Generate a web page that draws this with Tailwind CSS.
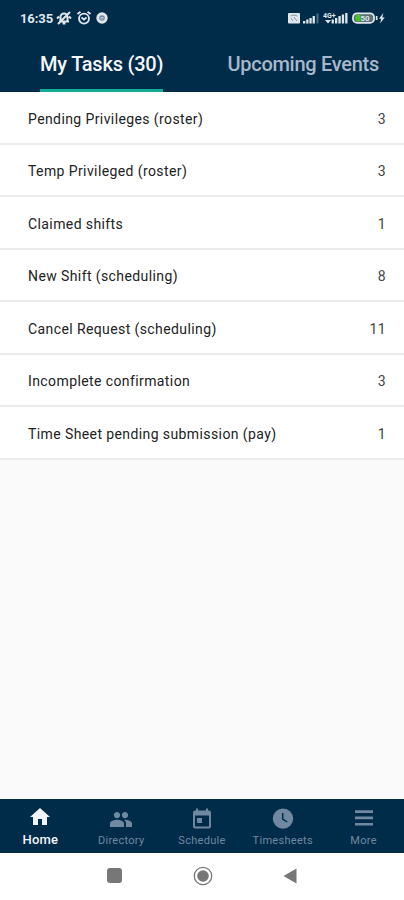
<!DOCTYPE html>
<html lang="en">

<head>
  <meta charset="UTF-8" />
  <meta name="viewport" content="width=device-width, initial-scale=1.0" />
  <title>My Tasks</title>
  <script src="https://cdn.jsdelivr.net/npm/@tailwindcss/browser@4"></script>
</head>

<body class="bg-[#fafafa] font-['Roboto',sans-serif]">
  <div class="flex h-screen w-full flex-col overflow-hidden">
    <header class="flex h-[92px] shrink-0 flex-col bg-[#002b49]">
      <!-- Status bar -->
      <div class="flex h-9 items-center justify-between pl-5 pr-[18px] text-[#dfe6ec]">
        <div class="flex items-center">
          <span class="w-[34px] whitespace-nowrap pt-px text-[13px] font-bold tracking-[-0.1px]">16:35</span>
          <svg class="ml-0.5 h-4 w-4" viewBox="0 0 16 16" fill="none" stroke="currentColor" stroke-width="2">
            <path d="M3 11.5h10M4.5 11V7a3.5 3.5 0 0 1 7 0v4M6.5 13.5h3M2 14 14 2M1 8.5l2-2M13 6.5l2 2" />
          </svg>
          <svg class="ml-1 h-4 w-4" viewBox="0 0 16 16" fill="none" stroke="currentColor" stroke-width="1.9">
            <circle cx="8" cy="8.6" r="5" />
            <path d="M1.5 4 4.5 1.8M14.5 4l-3-2.2M5.5 7.5 8 9.5l2.5-2" />
          </svg>
          <svg class="ml-[3px] h-3.5 w-3.5" viewBox="0 0 14 14">
            <circle cx="7" cy="7" r="5.7" fill="currentColor" />
            <circle cx="7" cy="7" r="2.8" fill="#71879a" />
            <path d="M5.5 6.5h3M5.5 8h3" stroke="#dfe6ec" stroke-width=".7" />
          </svg>
        </div>
        <div class="flex items-center">
          <svg class="h-3.5 w-[98px]" viewBox="0 0 98 14" fill="currentColor">
            <rect x="0" y="2" width="12" height="10.5" rx="1" />
            <path d="M2.5 5q3.5-2 7 0M3 7l2 3M6 6l3 4" fill="none" stroke="#8798a6" />
            <path d="M15 10h2.3v2.5H15zM18.2 8.5h2.3v4h-2.3zM21.4 7h2.3v5.5h-2.3zM24.6 5h2.3v7.5h-2.3z" />
            <path d="M28.5 2.5h2v10h-2z" opacity=".35" />
            <text x="35" y="6.5" font-size="7" font-weight="700">4G+</text>
            <path d="M37 9l3 3.5L43 9zM43.6 8.5h2.3v4h-2.3zM47 7h2.3v5.5H47zM50.4 5h2.3v7.5h-2.3zM53.8 3.5h2.3v9h-2.3zM57.2 2h2.3v10.5h-2.3z" />
            <rect x="65" y="2.3" width="21" height="9.6" rx="4" fill="#596f79" stroke="currentColor" stroke-width="1.8" />
            <path d="M68 4h4.5v6.2H68q-1.5-3 0-6.2z" fill="#45c51d" />
            <text x="72.5" y="9.9" font-size="8" font-weight="700">50</text>
            <path d="M87.8 5h1.7v4h-1.7zM95.3 2 91 7.8h2.3l-1.3 4.7 4.7-6h-2.4z" />
          </svg>
        </div>
      </div>

      <!-- Tabs -->
      <div class="flex flex-1 justify-between pl-10 pr-[25px]">
        <button class="flex h-14 items-center border-b-[3px] border-[#14ab96] pt-0.5 text-xl font-medium leading-6 tracking-[-0.22px] text-[#f5f7f9]">My Tasks (30)</button>
        <button class="flex h-14 items-center border-b-[3px] border-transparent pt-0.5 text-xl font-medium leading-6 tracking-[-0.28px] text-[#a7b8ca]">Upcoming Events</button>
      </div>
    </header>

    <!-- Task list -->
    <main class="flex-1" id="task-list"></main>

    <!-- Bottom navigation -->
    <nav class="grid h-[54px] shrink-0 grid-cols-5 bg-[#002b49] text-[11px] tracking-[0.3px] text-[#7089a1]">
      <a class="flex flex-col items-center pt-1.5 text-[#f0f3f6]">
        <svg class="h-6 w-6" viewBox="0 0 24 24" fill="currentColor">
          <path d="M10 20v-6h4v6h5v-8h3L12 3 2 12h3v8z" />
        </svg>
        <span class="pt-0.5 text-[13px] font-medium leading-[18px] tracking-[0.2px]">Home</span>
      </a>
      <a class="flex flex-col items-center pt-2">
        <svg class="h-6 w-6" viewBox="0 0 24 24" fill="currentColor">
          <path d="M16 11.3c1.75 0 3.2-1.4 3.2-3.2S17.75 4.9 16 4.9s-3.2 1.4-3.2 3.2 1.45 3.2 3.2 3.2zm-8 0c1.75 0 3.2-1.4 3.2-3.2S9.75 4.9 8 4.9 4.8 6.3 4.8 8.1s1.45 3.2 3.2 3.2zm0 1.5c-2.33 0-7 1.17-7 3.7V20h14v-3.5c0-2.53-4.67-3.7-7-3.7zm8 0c-.29 0-.62.02-.97.05 1.16.84 1.97 1.97 1.97 3.65V20h6v-3.5c0-2.53-4.67-3.7-7-3.7z" />
        </svg>
        <span class="pt-px leading-[18px]">Directory</span>
      </a>
      <a class="flex flex-col items-center pt-2">
        <svg class="h-6 w-6" viewBox="0 0 24 24" fill="currentColor">
          <path d="M19 3.5h-1V1.5h-2v2H8v-2H6v2H5a2 2 0 0 0-2 2v14a2 2 0 0 0 2 2h14a2 2 0 0 0 2-2v-14a2 2 0 0 0-2-2zm0 16H5v-11h14v11zM7 11h5v5H7z" />
        </svg>
        <span class="pt-px leading-[18px]">Schedule</span>
      </a>
      <a class="flex flex-col items-center pt-2">
        <svg class="h-6 w-6" viewBox="0 0 24 24">
          <circle cx="12" cy="11.6" r="10.2" fill="currentColor" />
          <path d="M11.7 6v6l4.5 3" fill="none" stroke="#002b49" stroke-width="1.5" />
        </svg>
        <span class="pt-px leading-[18px]">Timesheets</span>
      </a>
      <a class="flex flex-col items-center pt-2">
        <svg class="h-6 w-6" viewBox="0 0 24 24" fill="currentColor">
          <path d="M3 3.3h18v2.6H3zM3 9.6h18v2.6H3zM3 16h18v2.6H3z" />
        </svg>
        <span class="pt-px leading-[18px]">More</span>
      </a>
    </nav>

    <!-- System buttons -->
    <div class="flex h-[47px] shrink-0 items-center justify-between bg-white pb-0.5 pl-[107px] pr-[107px] text-[#777777]">
      <span class="h-[15px] w-[15px] rounded-[3px] bg-current"></span>
      <svg class="h-5 w-5" viewBox="0 0 20 20">
        <circle cx="10" cy="10" r="8.7" fill="none" stroke="currentColor" stroke-width="1.3" />
        <circle cx="10" cy="10" r="5.8" fill="currentColor" />
      </svg>
      <svg class="h-4 w-[14px]" viewBox="0 0 14 16" fill="currentColor">
        <path d="M13.5.5v15L.5 8z" />
      </svg>
    </div>
  </div>

  <script>
    const tasks = [
      { name: "Pending Privileges (roster)", count: 3 },
      { name: "Temp Privileged (roster)", count: 3 },
      { name: "Claimed shifts", count: 1 },
      { name: "New Shift (scheduling)", count: 8 },
      { name: "Cancel Request (scheduling)", count: 11 },
      { name: "Incomplete confirmation", count: 3 },
      { name: "Time Sheet pending submission (pay)", count: 1 }
    ];

    // Render task rows
    document.getElementById('task-list').innerHTML = tasks.map(task => `
      <div class="flex h-[52.5px] items-center justify-between border-b-2 border-[#ebebeb] bg-white pl-7 pr-[18px] pt-[3px] text-sm tracking-[0.4px] text-[#222222]">
        <span>${task.name}</span>
        <span class="text-[#444444]">${task.count}</span>
      </div>
    `).join('');
  </script>
</body>

</html>
